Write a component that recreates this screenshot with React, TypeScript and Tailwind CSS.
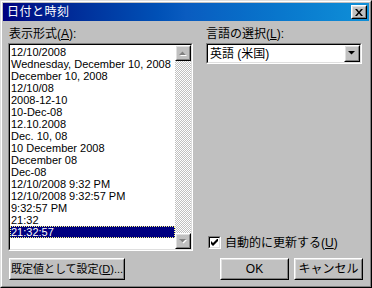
const formats = [
  '12/10/2008',
  'Wednesday, December 10, 2008',
  'December 10, 2008',
  '12/10/08',
  '2008-12-10',
  '10-Dec-08',
  '12.10.2008',
  'Dec. 10, 08',
  '10 December 2008',
  'December 08',
  'Dec-08',
  '12/10/2008 9:32 PM',
  '12/10/2008 9:32:57 PM',
  '9:32:57 PM',
  '21:32',
  '21:32:57',
]

const font = { fontFamily: '"Liberation Sans", "Noto Sans CJK JP", sans-serif' }

function Raised({ className = '', children }: { className?: string; children?: React.ReactNode }) {
  return (
    <div className={`border border-t-white border-l-white border-r-black border-b-black ${className}`}>
      <div className="w-full h-full border border-t-[#dfdfdf] border-l-[#dfdfdf] border-r-[#808080] border-b-[#808080] bg-[#c0c0c0] flex items-center justify-center whitespace-nowrap">
        {children}
      </div>
    </div>
  )
}

function Arrow({ up = false, disabled = false }: { up?: boolean; disabled?: boolean }) {
  const c = disabled ? '#808080' : '#000'
  return (
    <svg width="8" height="5" viewBox="0 0 8 5" className="block">
      {disabled && <path d={up ? 'M1 5h7L4.5 1.5z' : 'M1 1h7L4.5 4.5z'} fill="#fff" />}
      <path d={up ? 'M0 4h7L3.5 0.5z' : 'M0 0h7L3.5 3.5z'} fill={c} />
    </svg>
  )
}

function Sunken({ className = '', children }: { className?: string; children?: React.ReactNode }) {
  return (
    <div className={`border border-t-[#808080] border-l-[#808080] border-r-white border-b-white ${className}`}>
      <div className="w-full h-full border border-t-black border-l-black border-r-[#dfdfdf] border-b-[#dfdfdf] bg-white flex">
        {children}
      </div>
    </div>
  )
}

export default function App() {
  return (
    <div className="w-[372px] h-[288px] text-[12px] leading-[12px] text-black select-none" style={font}>
      <div className="w-full h-full border border-t-[#dfdfdf] border-l-[#dfdfdf] border-r-black border-b-black">
        <div className="w-full h-full border border-t-white border-l-white border-r-[#808080] border-b-[#808080] bg-[#c0c0c0] p-px flex flex-col">
          {/* Title bar */}
          <div className="h-[18px] bg-gradient-to-r from-[#000080] via-[#0a5cc0] to-[#1090d8] flex items-center pl-[4px] pr-[2px]">
            <span className="text-white text-[12px] tracking-[0.5px]">日付と時刻</span>
            <div className="flex-1" />
            <Raised className="w-[16px] h-[14px]">
              <svg width="8" height="7" viewBox="0 0 8 7">
                <path d="M0 0h2l2 2.5L6 0h2L5 3.5 8 7H6L4 4.5 2 7H0l3-3.5z" fill="#000" />
              </svg>
            </Raised>
          </div>

          {/* Body */}
          <div className="flex-1 flex pl-[5px] pr-[6px] pt-[6px] pb-[5px]">
            {/* Left column */}
            <div className="w-[185px] flex flex-col">
              <div className="h-[14px] leading-[14px] pl-[1px]">
                表示形式(<span className="underline">A</span>):
              </div>
              <Sunken className="mt-[2px] h-[208px] w-[185px]">
                <div className="flex-1 pt-[1px] text-[11px]">
                  {formats.map((f, i) => (
                    <div
                      key={f}
                      className={
                        i === formats.length - 1
                          ? 'h-[12px] leading-[12px] bg-[#000080] text-white outline-1 outline-dotted outline-[#ffff80] -outline-offset-1 pl-px whitespace-nowrap'
                          : 'h-[12px] leading-[12px] pl-px whitespace-nowrap'
                      }
                    >
                      {f}
                    </div>
                  ))}
                </div>
                <div className="w-[16px] flex flex-col bg-[repeating-conic-gradient(#c0c0c0_0_25%,#ffffff_0_50%)] bg-[length:2px_2px]">
                  <Raised className="w-[16px] h-[16px]">
                    <Arrow up disabled />
                  </Raised>
                  <div className="flex-1" />
                  <Raised className="w-[16px] h-[16px]">
                    <Arrow disabled />
                  </Raised>
                </div>
              </Sunken>
              <div className="flex-1" />
              <Raised className="w-[116px] h-[22px] ml-[1px]">
                <span className="text-[11px]">
                  既定値として設定(<span className="underline">D</span>)...
                </span>
              </Raised>
            </div>

            {/* Right column */}
            <div className="flex-1 flex flex-col pl-[13px]">
              <div className="h-[14px] leading-[14px]">
                言語の選択(<span className="underline">L</span>):
              </div>
              <Sunken className="mt-[2px] h-[21px] w-[156px]">
                <div className="flex-1 flex items-center pl-[2px]">英語 (米国)</div>
                <Raised className="w-[16px] h-[17px]">
                  <Arrow />
                </Raised>
              </Sunken>
              <div className="flex-1" />
              <div className="flex items-center gap-[4px] ml-[2px] mb-[9px]">
                <div className="w-[13px] h-[13px] border border-t-[#808080] border-l-[#808080] border-r-white border-b-white">
                  <div className="w-full h-full border border-t-black border-l-black border-r-[#dfdfdf] border-b-[#dfdfdf] bg-white flex items-center justify-center">
                    <svg width="7" height="7" viewBox="0 0 7 7">
                      <path d="M0 2v3l2 2 5-5V-1L2 4z" fill="#000" />
                    </svg>
                  </div>
                </div>
                <span>
                  自動的に更新する(<span className="underline">U</span>)
                </span>
              </div>
              <div className="flex justify-end gap-[5px]">
                <Raised className="w-[69px] h-[22px]">OK</Raised>
                <Raised className="w-[69px] h-[22px]">キャンセル</Raised>
              </div>
            </div>
          </div>
        </div>
      </div>
    </div>
  )
}
